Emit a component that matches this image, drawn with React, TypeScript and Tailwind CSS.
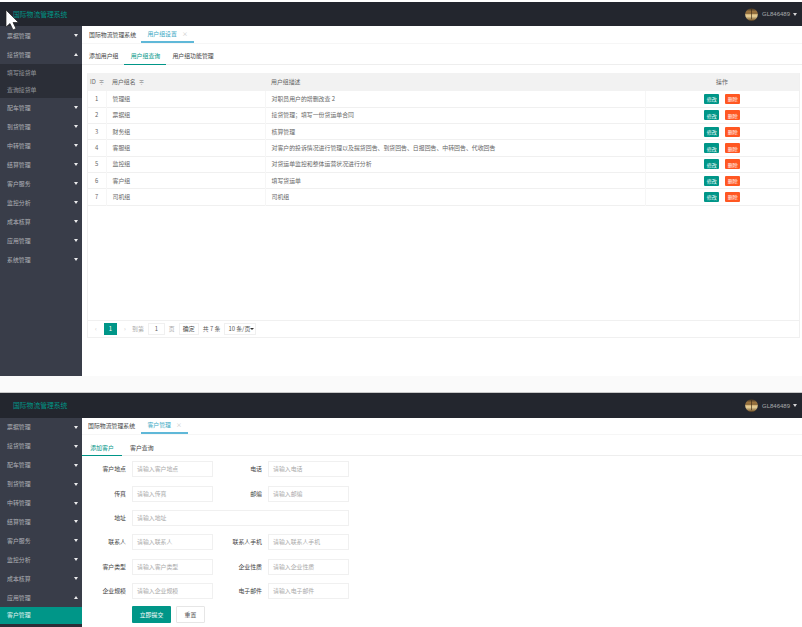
const font = { fontFamily: '"Noto Sans CJK SC", "Liberation Sans", sans-serif' };

function Caret({ up }: { up?: boolean }) {
  return (
    <span
      className={
        up
          ? "w-0 h-0 border-x-[2.5px] border-x-transparent border-b-[3px] border-b-white/90"
          : "w-0 h-0 border-x-[2.5px] border-x-transparent border-t-[3px] border-t-white/90"
      }
    />
  );
}

function NavItem({ label, up, tight }: { label: string; up?: boolean; tight?: boolean }) {
  return (
    <div className={`${tight ? "h-[18.9px]" : "h-[19px]"} flex items-center justify-between pl-[7px] pr-[4px] text-white/60`}>
      <span>{label}</span>
      <Caret up={up} />
    </div>
  );
}

function Avatar({ id }: { id: string }) {
  return (
    <svg width="13" height="13" viewBox="0 0 14 14">
      <defs>
        <linearGradient id={id} x1="0" y1="0" x2="0" y2="1">
          <stop offset="0" stopColor="#3d3020" />
          <stop offset="0.35" stopColor="#b98a4a" />
          <stop offset="0.62" stopColor="#ecd69e" />
          <stop offset="1" stopColor="#6b4a20" />
        </linearGradient>
      </defs>
      <circle cx="7" cy="7" r="6.8" fill={`url(#${id})`} />
      <path d="M0.5 5.5H13.5" stroke="#3a2a15" strokeWidth="0.7" />
      <path d="M7 1V12" stroke="#3a2a15" strokeWidth="0.7" />
    </svg>
  );
}

function Header({ id, short }: { id: string; short?: boolean }) {
  return (
    <div className={`${short ? "h-[24px]" : "h-[25px]"} bg-[#23262e] flex items-center justify-between pl-[13px] pr-[5px]`}>
      <span className="text-[#009688] text-[6.8px]">国际物流管理系统</span>
      <div className="flex items-center gap-[3px] text-white/60">
        <Avatar id={id} />
        <span className="ml-[1px] text-[6px]" style={{ fontFamily: '"Liberation Sans", sans-serif' }}>GL846489</span>
        <span className="w-0 h-0 border-x-[2px] border-x-transparent border-t-[3px] border-t-white/80" />
      </div>
    </div>
  );
}

const rows = [
  ["1", "管理组", "对职员用户的增删改查 2"],
  ["2", "票据组", "接货管理；填写一份货运单合同"],
  ["3", "财务组", "核算管理"],
  ["4", "客服组", "对客户的投诉情况进行管理以及提货回告、到货回告、日报回告、中转回告、代收回告"],
  ["5", "监控组", "对货运单监控和整体运营状况进行分析"],
  ["6", "客户组", "填写货运单"],
  ["7", "司机组", "司机组"],
];

function Sort() {
  return <span className="text-[#aaa] ml-[3px]">≑</span>;
}

function TopPage() {
  return (
    <div className="h-[376px] flex flex-col bg-white pt-[2px]">
      <Header id="a1" short />
      <div className="flex flex-1 min-h-0">
        <aside className="w-[82px] shrink-0 bg-[#393d49]">
          <NavItem label="票据管理" />
          <NavItem label="接货管理" up />
          <div className="bg-[#2b2e37] text-white/50">
            <div className="h-[17px] flex items-center pl-[7px]">填写接货单</div>
            <div className="h-[17px] flex items-center pl-[7px]">查询接货单</div>
          </div>
          {["配车管理", "到货管理", "中转管理", "结算管理", "客户服务", "监控分析", "成本核算", "应用管理", "系统管理"].map((l) => (
            <NavItem key={l} label={l} />
          ))}
        </aside>
        <main className="flex-1 min-w-0 flex flex-col">
          <div className="h-[18px] flex items-end border-b border-[#f6f6f6] pl-[7px] text-[#444]">
            <span className="h-full flex items-center">国际物流管理系统</span>
            <span className="ml-[5px] w-[53px] h-full flex items-center justify-center gap-[5px] border-b-2 border-[#5fb8d8] text-[#3aa9c4]">
              用户组设置<span className="text-[#ccc]">×</span>
            </span>
          </div>
          <div className="h-[21px] flex items-end border-b border-[#eeeeee] pl-[7px] text-[#444]">
            <span className="h-full flex items-center pt-[3px] mr-[6px]">添加用户组</span>
            <span className="h-[21px] w-[42px] flex items-center justify-center pt-[3px] border-b border-[#009688] -mb-px text-[#009688]">用户组查询</span>
            <span className="h-full flex items-center pt-[3px] ml-[6px]">用户组功能管理</span>
          </div>
          <div className="ml-[5px] mr-[2px] mt-[8px] h-[265px] border-x border-b border-[#f0f0f0] flex flex-col">
            <table className="w-full table-fixed border-collapse text-[#666]">
              <colgroup>
                <col className="w-[18px]" />
                <col className="w-[159px]" />
                <col className="w-[380px]" />
                <col />
              </colgroup>
              <thead>
                <tr className="h-[18px] bg-[#f2f2f2]">
                  <th className="font-normal text-left pl-[2px]">ID<Sort /></th>
                  <th className="font-normal text-left pl-[6px]">用户组名<Sort /></th>
                  <th className="font-normal text-left pl-[6px]">用户组描述</th>
                  <th className="font-normal text-center">操作</th>
                </tr>
              </thead>
              <tbody>
                {rows.map((r) => (
                  <tr key={r[0]} className="h-[16.3px] border-b border-[#f0f0f0]">
                    <td className="text-center border-r border-[#f6f6f6]">{r[0]}</td>
                    <td className="pl-[6px] border-r border-[#f6f6f6]">{r[1]}</td>
                    <td className="pl-[6px] border-r border-[#f6f6f6]">{r[2]}</td>
                    <td>
                      <div className="flex justify-center gap-[6px] text-white text-[5px]">
                        <span className="w-[15px] h-[10px] bg-[#009688] flex items-center justify-center rounded-[1px]">修改</span>
                        <span className="w-[15px] h-[10px] bg-[#ff5722] flex items-center justify-center rounded-[1px]">删除</span>
                      </div>
                    </td>
                  </tr>
                ))}
              </tbody>
            </table>
            <div className="mt-auto h-[17px] border-t border-[#f0f0f0] flex items-center pl-[7px] text-[#888]">
              <span className="text-[#ccc] w-[4px]">‹</span>
              <span className="ml-[5px] w-[13px] h-[12px] bg-[#009688] text-white flex items-center justify-center">1</span>
              <span className="ml-[7px] text-[#ccc] w-[4px]">›</span>
              <span className="ml-[4px] text-[#aaa]">到第</span>
              <span className="ml-[4px] w-[17px] h-[12px] border border-[#f0f0f0] text-[#666] flex items-center justify-center">1</span>
              <span className="ml-[4px] text-[#aaa]">页</span>
              <span className="ml-[4px] w-[20px] h-[12px] border border-[#f0f0f0] text-[#444] flex items-center justify-center">确定</span>
              <span className="ml-[4px] text-[#555] whitespace-nowrap">共 7 条</span>
              <span className="ml-[4px] w-[32px] h-[12px] border border-[#f0f0f0] text-[#555] flex items-center justify-between px-[3px] whitespace-nowrap">
                10 条/页<span className="w-0 h-0 border-x-[2px] border-x-transparent border-t-[2px] border-t-[#333]" />
              </span>
            </div>
          </div>
        </main>
      </div>
    </div>
  );
}

function Field({ label, ph, wide, w }: { label: string; ph: string; wide?: boolean; w?: string }) {
  return (
    <div className="flex items-center">
      <span className={`text-right text-[#444] shrink-0 ${w ?? "w-[44px]"}`}>{label}</span>
      <div className={`ml-[6px] h-[16px] border border-[#f0f0f0] flex items-center pl-[4px] text-[#aaa] ${wide ? "w-[217px]" : "w-[81px]"}`}>
        {ph}
      </div>
    </div>
  );
}

function BottomPage() {
  const grid: [string, string, string, string][] = [
    ["客户地点", "请输入客户地点", "电话", "请输入电话"],
    ["传真", "请输入传真", "邮编", "请输入邮编"],
  ];
  const grid2: [string, string, string, string][] = [
    ["联系人", "请输入联系人", "联系人手机", "请输入联系人手机"],
    ["客户类型", "请输入客户类型", "企业性质", "请输入企业性质"],
    ["企业规模", "请输入企业规模", "电子邮件", "请输入电子邮件"],
  ];
  const Row = ({ r }: { r: [string, string, string, string] }) => (
    <div className="flex h-[24.4px] items-center">
      <Field label={r[0]} ph={r[1]} />
      <Field label={r[2]} ph={r[3]} w="w-[49px]" />
    </div>
  );
  return (
    <div className="h-[235px] flex flex-col overflow-hidden border-t border-[#c8c8c8]">
      <Header id="a2" />
      <div className="flex flex-1 min-h-0">
        <aside className="w-[82px] shrink-0 bg-[#393d49]">
          {["票据管理", "接货管理", "配车管理", "到货管理", "中转管理", "结算管理", "客户服务", "监控分析", "成本核算"].map((l) => (
            <NavItem key={l} label={l} tight />
          ))}
          <NavItem label="应用管理" up tight />
          <div className="h-[17px] bg-[#009688] text-white/90 flex items-center pl-[7px]">客户管理</div>
          <div className="h-[20px] bg-[#2b2e37]" />
        </aside>
        <main className="flex-1 min-w-0 flex flex-col bg-white">
          <div className="h-[17px] flex items-end border-b border-[#f6f6f6] pl-[6px] text-[#444]">
            <span className="h-full flex items-center">国际物流管理系统</span>
            <span className="ml-[6px] w-[47px] h-full flex items-center justify-center gap-[5px] border-b-2 border-[#5fb8d8] text-[#3aa9c4]">
              客户管理<span className="text-[#ccc]">×</span>
            </span>
          </div>
          <div className="h-[21px] flex items-end border-b border-[#eeeeee] text-[#444]">
            <span className="h-[21px] w-[40px] flex items-center justify-center pt-[5px] border-b border-[#009688] -mb-px text-[#009688]">添加客户</span>
            <span className="h-full flex items-center pt-[5px] ml-[8px]">客户查询</span>
          </div>
          <div className="pt-[1px]">
            {grid.map((r) => <Row key={r[0]} r={r} />)}
            <div className="flex h-[24.4px] items-center">
              <Field label="地址" ph="请输入地址" wide />
            </div>
            {grid2.map((r) => <Row key={r[0]} r={r} />)}
            <div className="flex mt-[3px] ml-[50px] gap-[5px]">
              <span className="w-[39px] h-[17px] bg-[#009688] text-white flex items-center justify-center rounded-[1px]">立即提交</span>
              <span className="w-[29px] h-[17px] bg-white border border-[#e6e6e6] text-[#555] flex items-center justify-center rounded-[1px]">重置</span>
            </div>
          </div>
        </main>
      </div>
    </div>
  );
}

export default function App() {
  return (
    <div className="relative w-[802px] h-[627px] overflow-hidden bg-white text-[5.9px] leading-none" style={font}>
      <TopPage />
      <div className="h-[16px] bg-[#fafafa]" />
      <BottomPage />
      <svg className="absolute left-[4px] top-[9px]" width="16" height="22" viewBox="0 0 16 22">
        <path d="M2 1V18L6 14.5L9 21L12 19.5L9 13.5H14.5Z" fill="#fff" stroke="#222" strokeWidth="0.7" />
      </svg>
    </div>
  );
}
